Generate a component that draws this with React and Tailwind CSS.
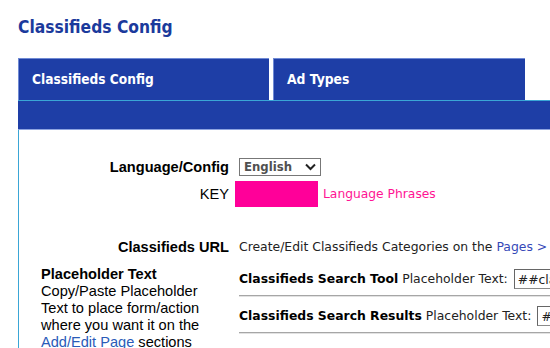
import React from "react";

const tahoma = { fontFamily: '"DejaVu Sans Condensed", "DejaVu Sans", sans-serif' };
const verdana = { fontFamily: '"DejaVu Sans", Verdana, sans-serif' };

export default function App() {
    return (
        <div className="w-[550px] h-[348px] overflow-hidden bg-white">
            {/* Page title */}
            <h1
                style={tahoma}
                className="pl-[18px] pt-[16px] h-[58px] text-[17.3px] leading-[22px] font-bold text-[#1b3a9c]"
            >
                Classifieds Config
            </h1>

            <div className="ml-[18px] w-[620px]">
                {/* Tabs */}
                <div className="flex gap-[4px] h-[42px]">
                    <div
                        style={tahoma}
                        className="w-[251px] bg-[#1e3ea6] border-t border-l border-[#6f8ad4] pl-[13px] flex items-center text-[13.6px] font-bold text-white"
                    >
                        Classifieds Config
                    </div>
                    <div
                        style={tahoma}
                        className="w-[252px] bg-[#1e3ea6] border-t border-l border-[#6f8ad4] pl-[13px] flex items-center text-[13.8px] font-bold text-white"
                    >
                        Ad Types
                    </div>
                </div>

                {/* Blue bar */}
                <div className="h-[30px] bg-[#1e3ea6] border-t border-t-[#3aa6d6] border-b border-b-[#8ea4e0]" />

                {/* Panel */}
                <div
                    className="border-l border-[#3aa6d6] pt-[28px] pb-[40px] grid grid-cols-[220px_1fr] text-[14.6px] text-black"
                    style={{ fontFamily: '"Liberation Sans", Arial, sans-serif' }}
                >
                    {/* Language/Config */}
                    <div className="pr-[10px] text-right font-bold h-[18px] leading-[18px]">Language/Config</div>
                    <div>
                        <div
                            style={tahoma}
                            className="w-[82px] h-[18px] border border-[#777] flex items-center justify-between pl-[4px] pr-[4px] text-[13px] font-bold text-[#505050] bg-white"
                        >
                            <span>English</span>
                            <svg width="11" height="8" viewBox="0 0 11 8" fill="none">
                                <path d="M1 1.5 L5.5 6 L10 1.5" stroke="#222" strokeWidth="2" />
                            </svg>
                        </div>
                    </div>

                    {/* KEY */}
                    <div className="pr-[10px] text-right mt-[5px] h-[26px] leading-[26px]">KEY</div>
                    <div className="mt-[5px] -ml-[4px] flex items-center">
                        <div className="w-[83px] h-[26px] bg-[#ff0099]" />
                        <a style={verdana} className="ml-[5px] text-[12.3px] text-[#ff1493]">
                            Language Phrases
                        </a>
                    </div>

                    {/* Classifieds URL */}
                    <div className="pr-[10px] text-right font-bold mt-[32px] h-[16px] leading-[16px]">Classifieds URL</div>
                    <div style={verdana} className="mt-[32px] h-[16px] leading-[16px] text-[12.4px] text-[#222] whitespace-nowrap">
                        Create/Edit Classifieds Categories on the <span className="text-[#3548b8]">Pages &gt;</span>
                    </div>

                    {/* Placeholder Text */}
                    <div className="mt-[11px] pl-[22px] pr-[20px] leading-[17px]">
                        <div className="font-bold">Placeholder Text</div>
                        <div className="w-[180px]">
                            Copy/Paste Placeholder Text to place form/action where you want it on the{" "}
                            <a className="text-[#2a5bb8]">Add/Edit Page</a> sections
                        </div>
                    </div>
                    <div style={verdana} className="mt-[11px] pt-[3px] text-[12.4px] text-[#222] whitespace-nowrap">
                        <div className="flex items-center h-[20px]">
                            <b className="text-black">Classifieds Search Tool</b>
                            <span className="ml-[4px]">Placeholder Text:</span>
                            <input
                                readOnly
                                value="##classifieds_search##"
                                style={verdana}
                                className="ml-[6px] w-[180px] h-[20px] px-[3px] border border-[#8a8a8a] border-t-[#666] border-l-[#666] text-[12.4px] text-[#222]"
                            />
                        </div>
                        <div className="mt-[6px] border-t border-[#a6a6a6] border-b border-b-[#e2e2e2]" />
                        <div className="mt-[9px] flex items-center h-[20px]">
                            <b className="text-black">Classifieds Search Results</b>
                            <span className="ml-[4px]">Placeholder Text:</span>
                            <input
                                readOnly
                                value="##classifieds_results##"
                                style={verdana}
                                className="ml-[6px] w-[180px] h-[20px] px-[3px] border border-[#8a8a8a] border-t-[#666] border-l-[#666] text-[12.4px] text-[#222]"
                            />
                        </div>
                        <div className="mt-[6px] border-t border-[#a6a6a6] border-b border-b-[#e2e2e2]" />
                    </div>
                </div>
            </div>
        </div>
    );
}
